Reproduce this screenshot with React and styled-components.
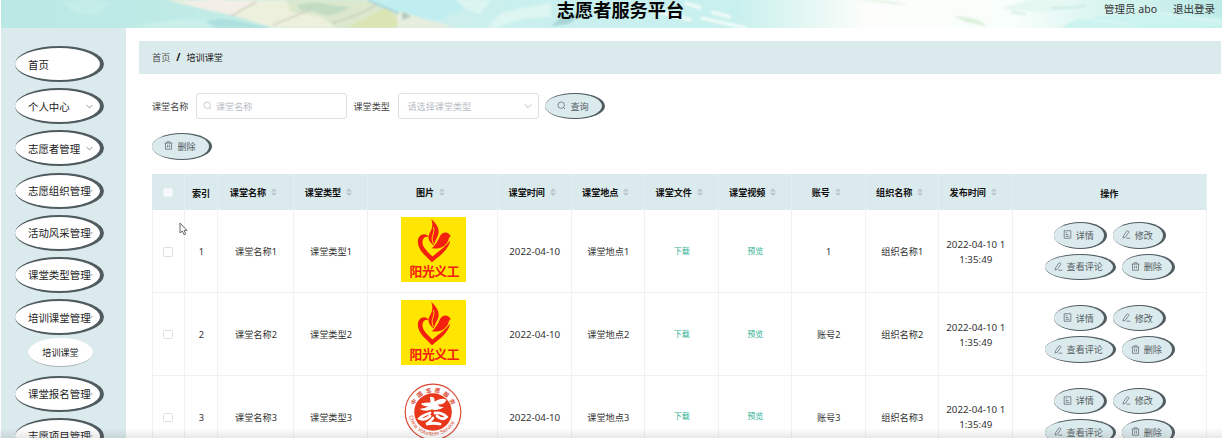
import React from "react";
import styled, { createGlobalStyle } from "styled-components";

const Global = createGlobalStyle`
  * { box-sizing: border-box; }
  body {
    margin: 0;
    overflow: hidden;
    background: #fff;
    font-family: "Noto Sans", "Noto Sans CJK SC", sans-serif;
    color: #333;
  }
  svg { display: block; flex: none; }
`;

const Page = styled.div`
  position: relative;
  display: flex;
  flex-direction: column;
  height: 438px;
  padding-left: 1px;
  overflow: hidden;
`;

const Header = styled.header`
  position: relative;
  flex: none;
  height: 28px;
`;

const Scenery = styled.svg`
  position: absolute;
  inset: 0;
`;

const HeaderBar = styled.div`
  position: relative;
  display: grid;
  grid-template-columns: 1fr auto 1fr;
  height: 20px;
  padding: 0 7px 0 7px;
  align-items: center;
`;

const Title = styled.h1`
  grid-column: 2;
  margin: -2px 0 0;
  padding-left: 18px;
  font: 700 18.2px/20px "Noto Sans CJK SC", sans-serif;
  color: #050505;
  white-space: nowrap;
`;

const Account = styled.div`
  justify-self: end;
  display: flex;
  gap: 16px;
  padding-bottom: 2px;
  font-size: 10.5px;
  line-height: 18px;
  white-space: nowrap;
  color: #333;
`;

const Body = styled.div`
  display: flex;
  flex: 1;
  min-height: 0;
`;

const Sidebar = styled.nav`
  flex: none;
  display: flex;
  flex-direction: column;
  gap: 6.2px;
  width: 125px;
  padding: 18px 0 0 14px;
  overflow: hidden;
  background: #dbeaed;
`;

const MenuItem = styled.a`
  position: relative;
  flex: none;
  display: flex;
  align-items: center;
  width: 89px;
  height: 36px;
  padding-left: 13px;
  border: 2px solid #505b60;
  border-width: 2px 4px 2px 0;
  border-radius: 50%;
  background: #fff;
  font-size: 10.45px;
  color: #222;
  white-space: nowrap;
`;

const MenuArrow = styled.svg`
  position: absolute;
  right: 7px;
  top: 13px;
`;

const SubItem = styled.a`
  flex: none;
  display: flex;
  align-items: center;
  justify-content: center;
  width: 65px;
  height: 29px;
  margin: -3px 0 2px 13px;
  border-bottom: 1px solid #a9b4b7;
  border-radius: 50%;
  background: #fff;
  font-size: 9.1px;
  color: #222;
`;

const Main = styled.main`
  flex: 1;
  min-width: 0;
  padding: 13px 1.5px 0 13px;
`;

const Crumbs = styled.div`
  display: flex;
  align-items: center;
  gap: 6px;
  height: 32.5px;
  padding-left: 13px;
  background: #dbeaed;
  font-size: 9.15px;
  color: #555;
`;

const Current = styled.span`
  color: #222;
`;

const Slash = styled.b`
  font-size: 10px;
  color: #111;
`;

const Content = styled.div`
  padding: 19.5px 0 0 13px;
`;

const Filters = styled.div`
  display: flex;
  align-items: center;
  height: 26px;
`;

const Label = styled.label`
  width: ${(p) => p.$w}px;
  padding-bottom: 1px;
  font-size: 9.1px;
  color: #444;
`;

const Field = styled.div`
  display: flex;
  align-items: center;
  gap: 4px;
  width: ${(p) => p.$w}px;
  height: 26px;
  margin-right: ${(p) => p.$gap}px;
  padding: 0 6px 1px ${(p) => p.$pad}px;
  border: 1px solid #dcdfe6;
  border-radius: 3px;
  background: #fff;
  font-size: 9.1px;
  color: #b9bdc5;
`;

const Placeholder = styled.span`
  flex: 1;
`;

const OvalButton = styled.button`
  display: flex;
  align-items: center;
  justify-content: center;
  gap: 4px;
  width: ${(p) => p.$w}px;
  height: 26.5px;
  padding: 0 1px 1px 0;
  border: 1px solid #505b60;
  border-width: 1px 3px 1px 0;
  border-radius: 50%;
  background: #dbeaed;
  font: 9.1px "Noto Sans CJK SC", sans-serif;
  color: #555e63;
  white-space: nowrap;
`;

const Tools = styled.div`
  display: flex;
  padding: 14px 0 14.5px;
`;

const Row = styled.div`
  display: grid;
  grid-template-columns: 33px 33px 76px 74px 130px repeat(7, 73.5px) 194.5px;
  width: 1055px;
`;

const HeadRow = styled(Row)`
  height: 36px;
  background: #dbeaed;
`;

const HeadCell = styled.div`
  display: flex;
  align-items: center;
  justify-content: center;
  gap: 5px;
  padding-top: ${(p) => (p.$low ? 1 : 0)}px;
  padding-bottom: ${(p) => (p.$low ? 0 : 1)}px;
  padding-right: ${(p) => (p.$low ? 0 : 4)}px;
  border-right: 1px solid #e4eff2;
  font: 700 9.1px "Noto Sans CJK SC", sans-serif;
  color: #111;
  white-space: nowrap;
`;

const DataRow = styled(Row)`
  height: 82.8px;
`;

const Cell = styled.div`
  display: flex;
  align-items: center;
  justify-content: center;
  padding: 2px 0 0 1px;
  border-right: 1px solid #eff1f5;
  border-bottom: 1px solid #eff1f5;
  font-size: 9.2px;
  line-height: 15px;
  color: #333;
  text-align: center;
  white-space: nowrap;

  &:first-child { border-left: 1px solid #eff1f5; }
`;

const Stamp = styled.span`
  font-size: 9.75px;
`;

const Link = styled.a`
  padding-bottom: 3px;
  font-size: 8.1px;
  color: #2fb193;
`;

const Check = styled.span`
  width: 9.5px;
  height: 9.5px;
  margin-right: ${(p) => (p.$head ? 0 : 2)}px;
  border: 1px solid ${(p) => (p.$head ? "#eef2f6" : "#dcdfe6")};
  border-radius: 1.5px;
  background: ${(p) => (p.$head ? "#f7f9fc" : "#fff")};
`;

const PictureCell = styled(Cell)`
  padding: 0 0 2.5px 1px;
`;

const ActionCell = styled(Cell)`
  flex-direction: column;
  justify-content: flex-start;
  gap: 5px;
  padding: 12px 0 0 1px;
`;

const Pair = styled.div`
  display: flex;
  gap: 6px;
`;

const Pointer = styled.svg`
  position: absolute;
  left: 179px;
  top: 222px;
`;

const BottomShade = styled.div`
  position: absolute;
  left: 0;
  right: 0;
  bottom: 0;
  height: 10px;
  background: linear-gradient(rgba(80, 80, 80, 0), rgba(80, 80, 80, 0.13));
`;

const iconPaths = {
  search: (
    <>
      <circle cx="5.6" cy="5.6" r="4.3" />
      <path d="M8.6 8.6 10.8 10.8" />
    </>
  ),
  trash: (
    <path d="M.8 2.8h10.4M4 2.6V1h4v1.6M2 2.8v8.2h8V2.8M4.8 5v3.8M7.2 5v3.8" />
  ),
  doc: <path d="M1.6 1h8.8v10H1.6zM3.6 3.6h2M3.6 6h3.6M3.6 8.4h4.8" />,
  edit: (
    <path d="M1.4 10.8 2 7.8 6.4 1.5Q7.4.6 8.5 1.5T8.9 3.4L4.4 9.7 1.4 10.8ZM5.8 10.9H11" />
  ),
};

const Icon = ({ name, size = 9, color = "#667075" }) => (
  <svg width={size} height={size} viewBox="0 0 12 12" fill="none" stroke={color} strokeWidth="1.05">
    {iconPaths[name]}
  </svg>
);

const Oval = ({ icon, w, children }) => (
  <OvalButton $w={w}>
    <Icon name={icon} />
    {children}
  </OvalButton>
);

const SortMark = () => (
  <svg width="6" height="8" viewBox="0 0 6 8" fill="#bcc5cc">
    <path d="M0 3.4 3 .2 6 3.4ZM0 4.7 3 7.9 6 4.7Z" />
  </svg>
);

const SunshineLogo = () => (
  <svg width="65" height="65" viewBox="0 0 65 65">
    <rect width="65" height="65" fill="#ffe500" />
    <path
      fill="#f3200f"
      d="M28 20.5C25 14.5 17 17 16.8 24.5C17 33.5 25 39 31 45.2C37 40 47 34 49.3 23.5C44 30 38 34 31.5 39.5C26 34 21 30 21.5 24.5C22 20 26 19 28 20.5Z"
    />
    <path
      fill="#f3200f"
      d="M50 19 47.2 16.2C44 14.4 40.5 16 38.8 19.5C37 24 34.5 28 30.8 31.2C38 32.8 44.5 29.5 47 24C48 21.5 47.8 20 50 19Z"
    />
    <path
      fill="#f3200f"
      d="M30.3 2C37 8 39.5 14 36.5 19.5C34.5 23.5 33.5 26 32.8 28.5C26.5 23.5 26.5 19.5 29.5 14.5C32 10 31.6 6 30.3 2Z"
    />
    <path d="M32.5 10C34.5 17 28.5 19 32.6 27" fill="none" stroke="#ffe500" strokeWidth=".9" />
    <text
      x="33.5"
      y="58.6"
      textAnchor="middle"
      textLength="50"
      fontFamily="Noto Sans CJK SC"
      fontWeight="700"
      fontSize="12.8"
      fill="#f3200f"
    >
      阳光义工
    </text>
  </svg>
);

const arcLetters = [
  ["中", -62],
  ["国", -37],
  ["志", -12],
  ["愿", 12],
  ["服", 37],
  ["务", 62],
];

const ServiceLogo = () => (
  <svg width="58" height="65" viewBox="0 4 58 65">
    <circle cx="29" cy="33" r="27.8" fill="#fff" stroke="#d94a32" strokeWidth="1.2" />
    <circle cx="29" cy="33" r="18.8" fill="#e8371a" />
    {arcLetters.map(([c, a]) => (
      <text
        key={c}
        x="29"
        y="13.2"
        textAnchor="middle"
        transform={`rotate(${a} 29 33)`}
        fontFamily="Noto Sans CJK SC"
        fontWeight="700"
        fontSize="5.6"
        fill="#d94a32"
      >
        {c}
      </text>
    ))}
    <path
      fill="#fff"
      d="M26 18Q31 17 30.5 22.5Q38 18 42.5 21Q40 26 33.5 25.5Q35.5 28.5 40 28Q34 32.5 28 30.5Q21 33 15.5 30Q21 29.5 25 27Q19 28 17 24.5Q23 23 26.5 23.5Z"
    />
    <path
      fill="none"
      stroke="#fff"
      strokeWidth="2.8"
      strokeLinecap="round"
      d="M26 34Q19 36 15.5 39.5Q21 42 26 37M31 34Q38 33 42.5 38Q38 42 33 37M29 39Q25 44 22 45Q30 43.5 36 45"
    />
    <path id="serviceArc" d="M5 37A24.5 24.5 0 0 0 53 37" fill="none" />
    <text fontFamily="Liberation Sans" fontSize="5.6" fill="#d94a32">
      <textPath href="#serviceArc" startOffset="0">
        China Volunteer Service
      </textPath>
    </text>
  </svg>
);

const Landscape = () => (
  <Scenery width="1221" height="28" viewBox="0 0 1221 28" preserveAspectRatio="none">
    <defs>
      <linearGradient id="sky" x1="0" x2="1" y1="0" y2="0">
        <stop offset="0" stopColor="#b9e8e5" />
        <stop offset=".17" stopColor="#c0ebe6" />
        <stop offset=".33" stopColor="#d0edea" />
        <stop offset=".42" stopColor="#c9f0ee" />
        <stop offset=".6" stopColor="#c8f0ee" />
        <stop offset=".66" stopColor="#e4f7f3" />
        <stop offset=".71" stopColor="#fdfefb" />
        <stop offset=".83" stopColor="#f8fefb" />
        <stop offset=".9" stopColor="#daf5f0" />
        <stop offset="1" stopColor="#bceae6" />
      </linearGradient>
      <filter id="soft" x="-5%" y="-20%" width="110%" height="140%">
        <feGaussianBlur stdDeviation=".9" />
      </filter>
    </defs>
    <rect width="1221" height="28" fill="url(#sky)" />
    <g filter="url(#soft)">
      <path d="M165 0H366L400 14V28H272L231 15 190 6Z" fill="#edf0dd" />
      <path d="M366 0H480L440 20 400 18Z" fill="#c0eef0" />
      <path d="M285 0H362L398 14 384 28H335L320 17 290 12Z" fill="#dce8cd" />
      <path d="M345 28 385 8 400 22 396 28Z" fill="#dbe5b4" />
      <path d="M295 5Q315 0 330 5L350 7 335 14Q322 17 316 12L300 10Z" fill="#c2dbc3" />
      <path d="M180 2Q205 -2 230 0L255 1 230 15 198 8Z" fill="#f4efe6" />
      <path d="M230 16 255 2M272 25Q295 16 309 9M331 23Q358 16 375 5" fill="none" stroke="#c3c6ba" strokeWidth="1.3" />
      <path d="M366 0 402 15" stroke="#9fced4" strokeWidth="1.6" />
      <path d="M205 22Q215 17 231 20L272 28H212Z" fill="#aee0df" />
      <path d="M130 28Q165 18 200 19L215 28Z" fill="#c9f0e9" />
      <path d="M62 2Q85 -2 108 2L100 14Q80 16 70 10Z" fill="#c9efe9" opacity=".7" />
      <path d="M398 11Q425 20 455 28H396Z" fill="#e7eee0" />
      <path d="M401 12Q407 13 410 17L401 20Z" fill="#b4cbbd" />
      <path d="M455 0H490L479 14 466 10Z" fill="#ddf5f0" />
      <path d="M500 13Q520 8 550 3V17Q515 17 497 28H485Z" fill="#def6f2" />
      <path d="M550 26 562 16 580 13 568 24Z" fill="#a9d5d5" />
      <path d="M655 11 690 20M700 18 745 28M710 12 730 17M684 3 700 8" stroke="#f0fbf8" strokeWidth="3.5" />
      <path d="M855 0Q890 0 907 5L895 4ZM953 16Q980 18 985 26L965 22Z" fill="#dcefdc" />
      <path d="M1000 8Q1040 15 1083 7 1065 0 1030 0Z" fill="#e4f7f1" />
      <path d="M1010 12 1025 14M1050 8Q1080 8 1085 5" stroke="#c4e6e0" strokeWidth="1.6" fill="none" />
      <path d="M1070 22Q1110 10 1221 18V28H1060Z" fill="#cbf3ef" />
      <path d="M1080 18 1130 24M1150 12 1221 22" stroke="#e1f8f5" strokeWidth="1.5" />
    </g>
  </Scenery>
);

const menuTop = ["首页", "个人中心", "志愿者管理", "志愿组织管理", "活动风采管理", "课堂类型管理", "培训课堂管理"];
const menuBottom = ["课堂报名管理", "志愿项目管理"];
const columns = ["课堂名称", "课堂类型", "图片", "课堂时间", "课堂地点", "课堂文件", "课堂视频", "账号", "组织名称", "发布时间"];
const records = [
  { id: 1, account: "1", Logo: SunshineLogo },
  { id: 2, account: "账号2", Logo: SunshineLogo },
  { id: 3, account: "账号3", Logo: ServiceLogo },
];

const Entry = ({ text }) => (
  <MenuItem>
    {text}
    {text !== "首页" && (
      <MenuArrow width="7" height="7" viewBox="0 0 7 7" fill="none" stroke="#7e8386" strokeWidth=".9">
        <path d="M.6 2 3.5 4.9 6.4 2" />
      </MenuArrow>
    )}
  </MenuItem>
);

const Record = ({ id, account, Logo }) => (
  <DataRow>
    <Cell><Check /></Cell>
    <Cell>{id}</Cell>
    <Cell>课堂名称{id}</Cell>
    <Cell>课堂类型{id}</Cell>
    <PictureCell><Logo /></PictureCell>
    <Cell><Stamp>2022-04-10</Stamp></Cell>
    <Cell>课堂地点{id}</Cell>
    <Cell><Link>下载</Link></Cell>
    <Cell><Link>预览</Link></Cell>
    <Cell>{account}</Cell>
    <Cell>组织名称{id}</Cell>
    <Cell><Stamp>2022-04-10 1<br />1:35:49</Stamp></Cell>
    <ActionCell>
      <Pair>
        <Oval icon="doc" w={53}>详情</Oval>
        <Oval icon="edit" w={53}>修改</Oval>
      </Pair>
      <Pair>
        <Oval icon="edit" w={71}>查看评论</Oval>
        <Oval icon="trash" w={53}>删除</Oval>
      </Pair>
    </ActionCell>
  </DataRow>
);

export default function App() {
  return (
    <Page>
      <Global />
      <Header>
        <Landscape />
        <HeaderBar>
          <Title>志愿者服务平台</Title>
          <Account>
            <span>管理员 abo</span>
            <span>退出登录</span>
          </Account>
        </HeaderBar>
      </Header>
      <Body>
        <Sidebar>
          {menuTop.map((t) => <Entry key={t} text={t} />)}
          <SubItem>培训课堂</SubItem>
          {menuBottom.map((t) => <Entry key={t} text={t} />)}
        </Sidebar>
        <Main>
          <Crumbs>
            <span>首页</span>
            <Slash>/</Slash>
            <Current>培训课堂</Current>
          </Crumbs>
          <Content>
            <Filters>
              <Label $w={44}>课堂名称</Label>
              <Field $w={151} $gap={6.5} $pad={6}>
                <Icon name="search" color="#b9bdc5" />
                <Placeholder>课堂名称</Placeholder>
              </Field>
              <Label $w={44}>课堂类型</Label>
              <Field $w={141} $gap={6.5} $pad={9}>
                <Placeholder>请选择课堂类型</Placeholder>
                <svg width="8" height="8" viewBox="0 0 8 8" fill="none" stroke="#b9bdc5">
                  <path d="M.6 2.3 4 5.7 7.4 2.3" />
                </svg>
              </Field>
              <Oval icon="search" w={60}>查询</Oval>
            </Filters>
            <Tools>
              <Oval icon="trash" w={60}>删除</Oval>
            </Tools>
            <HeadRow>
              <HeadCell $low><Check $head /></HeadCell>
              <HeadCell $low>索引</HeadCell>
              {columns.map((c) => (
                <HeadCell key={c}>{c}<SortMark /></HeadCell>
              ))}
              <HeadCell $low>操作</HeadCell>
            </HeadRow>
            {records.map((r) => <Record key={r.id} {...r} />)}
          </Content>
        </Main>
      </Body>
      <Pointer width="9" height="14" viewBox="0 0 9 14" fill="#fff" stroke="#555" strokeWidth=".9">
        <path d="M1 1V11L3.3 9 5 12.7 6.6 12 5.1 8.4H8Z" />
      </Pointer>
      <BottomShade />
    </Page>
  );
}
